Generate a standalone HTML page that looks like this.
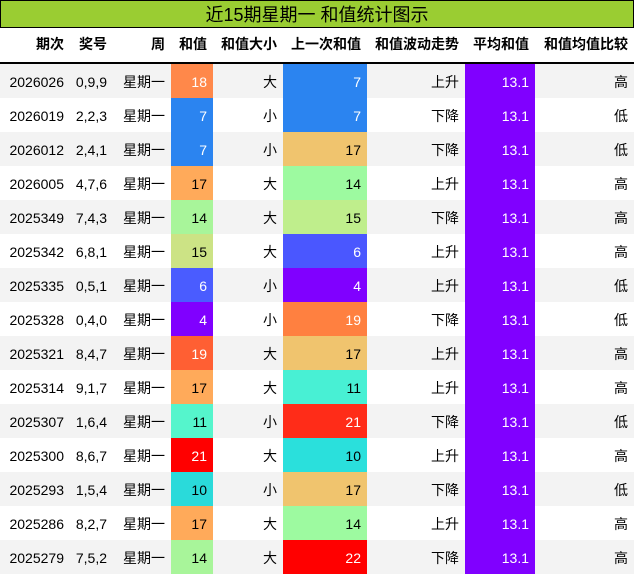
<!DOCTYPE html>
<html><head><meta charset="utf-8"><style>
body{margin:0;width:634px;height:575px;background:#fff;font-family:"Liberation Sans","Noto Sans CJK SC",sans-serif;overflow:hidden}
.t{position:absolute;left:0;top:0;width:632px;height:26px;background:#9acd32;border:1px solid #000;text-align:center;font-size:18px;line-height:28px;color:#000}
table{position:absolute;left:0;top:28px;border-collapse:collapse;table-layout:fixed;width:634px;font-size:14px}
td,th{padding:2px 6px 0 0;text-align:right;height:32px;white-space:nowrap}
th{font-weight:bold;height:32px;border-bottom:2px solid #000;padding-top:0;padding-bottom:2px}
tr:nth-child(even) td{background:#f3f3f3}
.w{color:#fff}
</style></head><body>
<div class="t">近15期星期一 和值统计图示</div>
<table>
<colgroup><col style="width:70px"><col style="width:43px"><col style="width:58px"><col style="width:42px"><col style="width:70px"><col style="width:84px"><col style="width:98px"><col style="width:70px"><col style="width:99px"></colgroup>
<tr><th>期次</th><th>奖号</th><th>周</th><th>和值</th><th>和值大小</th><th>上一次和值</th><th>和值波动走势</th><th>平均和值</th><th>和值均值比较</th></tr>
<tr><td>2026026</td><td>0,9,9</td><td>星期一</td><td class="w" style="background:#ff884a">18</td><td>大</td><td class="w" style="background:#2b84f0">7</td><td>上升</td><td class="w" style="background:#8000ff">13.1</td><td>高</td></tr>
<tr><td>2026019</td><td>2,2,3</td><td>星期一</td><td class="w" style="background:#2b84f0">7</td><td>小</td><td class="w" style="background:#2b84f0">7</td><td>下降</td><td class="w" style="background:#8000ff">13.1</td><td>低</td></tr>
<tr><td>2026012</td><td>2,4,1</td><td>星期一</td><td class="w" style="background:#2b84f0">7</td><td>小</td><td style="background:#f0c46e">17</td><td>下降</td><td class="w" style="background:#8000ff">13.1</td><td>低</td></tr>
<tr><td>2026005</td><td>4,7,6</td><td>星期一</td><td style="background:#ffaa5a">17</td><td>大</td><td style="background:#9dfaa0">14</td><td>上升</td><td class="w" style="background:#8000ff">13.1</td><td>高</td></tr>
<tr><td>2025349</td><td>7,4,3</td><td>星期一</td><td style="background:#a8f59a">14</td><td>大</td><td style="background:#bfee8c">15</td><td>下降</td><td class="w" style="background:#8000ff">13.1</td><td>高</td></tr>
<tr><td>2025342</td><td>6,8,1</td><td>星期一</td><td style="background:#cce385">15</td><td>大</td><td class="w" style="background:#4a57ff">6</td><td>上升</td><td class="w" style="background:#8000ff">13.1</td><td>高</td></tr>
<tr><td>2025335</td><td>0,5,1</td><td>星期一</td><td class="w" style="background:#4a5cff">6</td><td>小</td><td class="w" style="background:#8000ff">4</td><td>上升</td><td class="w" style="background:#8000ff">13.1</td><td>低</td></tr>
<tr><td>2025328</td><td>0,4,0</td><td>星期一</td><td class="w" style="background:#8000ff">4</td><td>小</td><td class="w" style="background:#ff8040">19</td><td>下降</td><td class="w" style="background:#8000ff">13.1</td><td>低</td></tr>
<tr><td>2025321</td><td>8,4,7</td><td>星期一</td><td class="w" style="background:#ff5f33">19</td><td>大</td><td style="background:#f0c46e">17</td><td>上升</td><td class="w" style="background:#8000ff">13.1</td><td>高</td></tr>
<tr><td>2025314</td><td>9,1,7</td><td>星期一</td><td style="background:#ffaa5a">17</td><td>大</td><td style="background:#48f0d4">11</td><td>上升</td><td class="w" style="background:#8000ff">13.1</td><td>高</td></tr>
<tr><td>2025307</td><td>1,6,4</td><td>星期一</td><td style="background:#55f5cc">11</td><td>小</td><td class="w" style="background:#ff2c18">21</td><td>下降</td><td class="w" style="background:#8000ff">13.1</td><td>低</td></tr>
<tr><td>2025300</td><td>8,6,7</td><td>星期一</td><td class="w" style="background:#ff0000">21</td><td>大</td><td style="background:#2ae0dc">10</td><td>上升</td><td class="w" style="background:#8000ff">13.1</td><td>高</td></tr>
<tr><td>2025293</td><td>1,5,4</td><td>星期一</td><td style="background:#2adada">10</td><td>小</td><td style="background:#f0c46e">17</td><td>下降</td><td class="w" style="background:#8000ff">13.1</td><td>低</td></tr>
<tr><td>2025286</td><td>8,2,7</td><td>星期一</td><td style="background:#ffaa5a">17</td><td>大</td><td style="background:#9dfaa0">14</td><td>上升</td><td class="w" style="background:#8000ff">13.1</td><td>高</td></tr>
<tr><td>2025279</td><td>7,5,2</td><td>星期一</td><td style="background:#a8f59a">14</td><td>大</td><td class="w" style="background:#ff0000">22</td><td>下降</td><td class="w" style="background:#8000ff">13.1</td><td>高</td></tr>
</table>
</body></html>
